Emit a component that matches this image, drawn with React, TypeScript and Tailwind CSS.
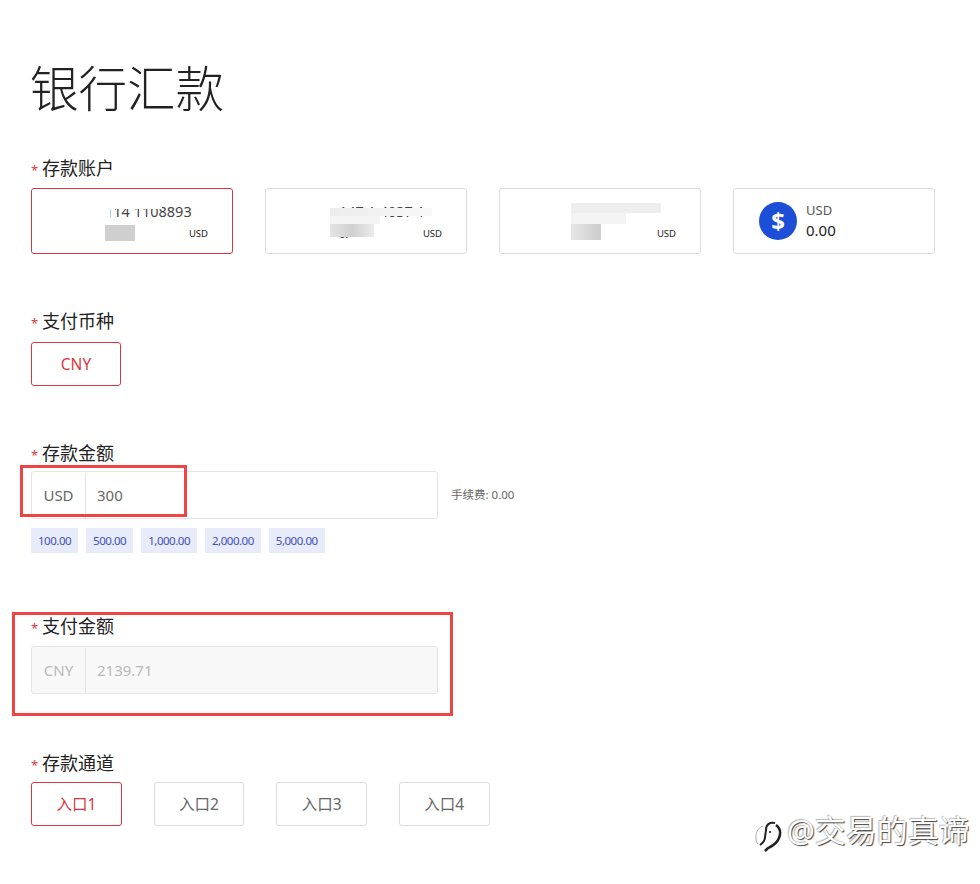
const font = "font-['Noto_Sans','Noto_Sans_CJK_SC',sans-serif]";

function Label({ text }: { text: string }) {
  return (
    <div className="flex h-[22px] items-center text-[18px] leading-[22px] text-[#222]">
      <span className="mr-[5px] w-[6px] pt-[4px] text-[13px] text-[#d9363e]">*</span>
      <span>{text}</span>
    </div>
  );
}

function Patch({ className }: { className: string }) {
  return <div className={`absolute ${className}`} />;
}

function AccountCard({ active, number, tail, children }: { active?: boolean; number: string; tail: string; children: React.ReactNode }) {
  return (
    <div className={`relative h-[66px] w-[202px] overflow-hidden rounded-[3px] border bg-white ${active ? 'border-[#d9363e]' : 'border-[#dcdcdc]'}`}>
      <div className="absolute left-[73px] top-[13px] text-[14.5px] leading-[18px] text-[#444]">{number}</div>
      <div className="absolute left-[73px] top-[38px] text-[11px] leading-[14px] text-[#333]">{tail}</div>
      <div className="absolute right-[24px] top-[38px] text-[9.5px] leading-[14px] text-[#222]">USD</div>
      {children}
    </div>
  );
}

function MoneyInput({ cur, value, disabled }: { cur: string; value: string; disabled?: boolean }) {
  return (
    <div className={`flex h-[48px] w-[407px] items-center rounded-[3px] border border-[#e4e4e4] pt-[1px] text-[15px] ${disabled ? 'bg-[#f8f8f8] text-[#b8b8b8]' : 'bg-white text-[#666]'}`}>
      <div className="flex h-full w-[54px] items-center justify-center border-r border-[#e4e4e4]">{cur}</div>
      <div className="pl-[11px]">{value}</div>
    </div>
  );
}

function Choice({ text, active, w }: { text: string; active?: boolean; w: string }) {
  return (
    <div className={`flex h-[44px] items-center justify-center rounded-[3px] border pt-[2px] text-[15.5px] ${w} ${active ? 'border-[#d9363e] text-[#d9363e]' : 'border-[#dcdcdc] text-[#666]'}`}>
      {text}
    </div>
  );
}

export default function App() {
  return (
    <div className={`relative h-[884px] w-[980px] overflow-hidden bg-white pl-[31px] pt-[57px] ${font}`}>
      <h1 className="-ml-[1px] h-[62px] text-[48.5px] font-light leading-[62px] text-[#222]">银行汇款</h1>

      <div className="mt-[38px]"><Label text="存款账户" /></div>
      <div className="mt-[9px] flex gap-[32px]">
        <AccountCard active number="114 1108893" tail="0">
          <Patch className="left-[60px] top-[0px] h-[20px] w-[70px] bg-white" />
          <Patch className="left-[130px] top-[0px] h-[16px] w-[30px] bg-white" />
          <Patch className="left-[70px] top-[16px] h-[14px] w-[8px] bg-white" />
          <Patch className="left-[73px] top-[36px] h-[16px] w-[30px] bg-[#cfcfcf]" />
        </AccountCard>
        <AccountCard number="147 1 4037 1" tail="0.">
          <Patch className="left-[64px] top-[19px] h-[8px] w-[102px] bg-gradient-to-r from-[#ececec] to-[#f8f8f8]" />
          <Patch className="left-[64px] top-[27px] h-[8px] w-[50px] bg-[#f4f4f4]" />
          <Patch className="left-[64px] top-[35px] h-[13px] w-[44px] bg-gradient-to-r from-[#e4e4e4] via-[#d0d0d0] to-[#ececec]" />
        </AccountCard>
        <AccountCard number="" tail="">
          <Patch className="left-[71px] top-[14px] h-[10px] w-[90px] bg-[#eeeeee]" />
          <Patch className="left-[71px] top-[24px] h-[11px] w-[55px] bg-[#f4f4f4]" />
          <Patch className="left-[71px] top-[35px] h-[16px] w-[30px] bg-gradient-to-r from-[#e6e6e6] to-[#cccccc]" />
        </AccountCard>
        <div className="flex h-[66px] w-[202px] items-center rounded-[3px] border border-[#dcdcdc] bg-white pl-[25px]">
          <div className="flex h-[38px] w-[38px] items-center justify-center rounded-full bg-[#1d4ed8] text-[24px] font-bold leading-none text-white">$</div>
          <div className="ml-[9px]">
            <div className="text-[13px] leading-[18px] text-[#555]">USD</div>
            <div className="text-[15px] leading-[22px] text-[#222]">0.00</div>
          </div>
        </div>
      </div>

      <div className="mt-[56px]"><Label text="支付币种" /></div>
      <div className="mt-[10px] flex">
        <Choice text="CNY" active w="w-[90px]" />
      </div>

      <div className="mt-[56px]"><Label text="存款金额" /></div>
      <div className="mt-[7px] flex items-center">
        <MoneyInput cur="USD" value="300" />
        <span className="ml-[13px] text-[11.5px] text-[#666]">手续费: 0.00</span>
      </div>
      <div className="mt-[9px] flex gap-[8px]">
        {['100.00', '500.00', '1,000.00', '2,000.00', '5,000.00'].map((v) => (
          <div key={v} className="flex h-[25px] items-center bg-[#e8ebfa] px-[7px] text-[11.5px] tracking-[-0.48px] text-[#3f51b5]">{v}</div>
        ))}
      </div>

      <div className="mt-[62px]"><Label text="支付金额" /></div>
      <div className="mt-[9px]">
        <MoneyInput cur="CNY" value="2139.71" disabled />
      </div>

      <div className="mt-[58px]"><Label text="存款通道" /></div>
      <div className="mt-[8px] flex gap-[32px]">
        <Choice text="入口1" active w="w-[90.67px]" />
        <Choice text="入口2" w="w-[90.67px]" />
        <Choice text="入口3" w="w-[90.67px]" />
        <Choice text="入口4" w="w-[90.67px]" />
      </div>

      <div className="absolute left-[20px] top-[465px] h-[52px] w-[167px] border-[3px] border-[#ef4444]" />
      <div className="absolute left-[12px] top-[612px] h-[104px] w-[441px] border-[3px] border-[#ef4444]" />

      <div className="absolute left-[754px] top-[813px] flex items-start">
        <svg className="mt-[7px]" width="28" height="34" viewBox="0 0 28 34" fill="none" stroke="#222" strokeWidth="2">
          <path d="M9 6C4 8 1 13 2 19c0 2 1 4 2 5" stroke="#aaa" strokeWidth="1" />
          <path d="M21 3c-5-1-9 1-9 7l-1 7c0 4-2 6-5 8" />
          <path d="M22 5c4 3 5 8 3 13-2 6-7 8-11 10l-3 3" strokeWidth="2.5" />
          <circle cx="16" cy="12" r="1.1" fill="#222" stroke="none" />
        </svg>
        <span className="ml-[5px] text-[31px] leading-[34px] text-white [text-shadow:1px_1px_1px_#444,-1px_-1px_1px_#bbb]">@交易的真谛</span>
      </div>
    </div>
  );
}
